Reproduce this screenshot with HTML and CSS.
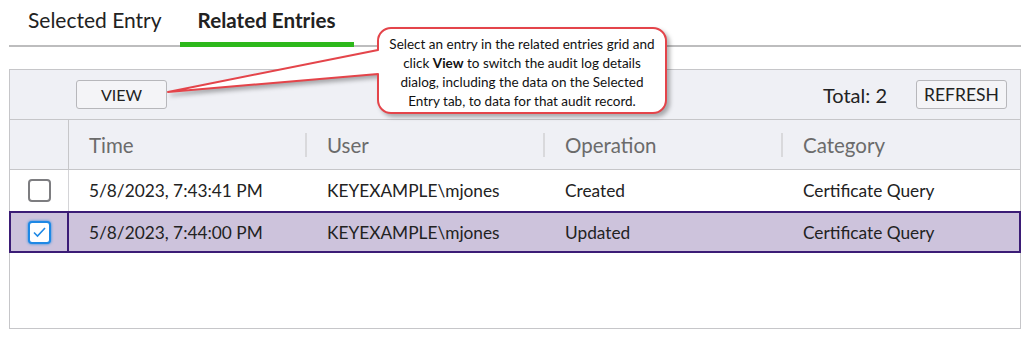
FILE: index.html
```html
<!DOCTYPE html>
<html lang="en">
<head>
  <meta charset="UTF-8">
  <title>Audit Log Details - Related Entries</title>
  <link rel="stylesheet" href="styles.css">
</head>
<body>
  <div class="page">
    <div class="tabs">
      <div class="tab">Selected Entry</div>
      <div class="tab active">Related Entries</div>
    </div>

    <div class="grid">
      <div class="toolbar">
        <button class="btn">VIEW</button>
        <div class="spacer"></div>
        <span class="total">Total: 2</span>
        <button class="btn refresh">REFRESH</button>
      </div>

      <div class="row head">
        <div class="cell check"></div>
        <div class="cell"><span class="sep"></span>Time</div>
        <div class="cell"><span class="sep"></span>User</div>
        <div class="cell"><span class="sep"></span>Operation</div>
        <div class="cell"><span class="sep"></span>Category</div>
      </div>

      <div class="row">
        <div class="cell check"><span class="box"></span></div>
        <div class="cell">5/8/2023, 7:43:41 PM</div>
        <div class="cell">KEYEXAMPLE\mjones</div>
        <div class="cell">Created</div>
        <div class="cell">Certificate Query</div>
      </div>

      <div class="row selected">
        <div class="cell check">
          <span class="box checked">
            <svg width="15" height="12" viewBox="0 0 15 12"><path d="M2 6.5 L5.5 10 L13 2" fill="none" stroke="#1e88e5" stroke-width="1.6"/></svg>
          </span>
        </div>
        <div class="cell">5/8/2023, 7:44:00 PM</div>
        <div class="cell">KEYEXAMPLE\mjones</div>
        <div class="cell">Updated</div>
        <div class="cell">Certificate Query</div>
      </div>

      <div class="empty"></div>
    </div>

    <!-- callout overlay -->
    <svg class="callout-shape" width="700" height="130" viewBox="0 0 700 130">
      <path d="M391 28 L653 28 A13 13 0 0 1 666 41 L666 100 A13 13 0 0 1 653 113 L391 113 A13 13 0 0 1 378 100 L378 74 L168 92 L378 50 L378 41 A13 13 0 0 1 391 28 Z"
            fill="#fff" stroke="#e4444a" stroke-width="2" stroke-linejoin="round"/>
    </svg>
    <div class="callout-text">
      <p>Select an entry in the related entries grid and<br>
      click <b>View</b> to switch the audit log details<br>
      dialog, including the data on the Selected<br>
      Entry tab, to data for that audit record.</p>
    </div>
  </div>
</body>
</html>
```

FILE: styles.css
```css
body {
  margin: 0;
  background: #fff;
  font-family: 'Lato', 'Open Sans', sans-serif;
  color: #222;
}
.page {
  position: relative;
  padding: 0 9px;
  width: 1012px;
}
.tabs {
  display: flex;
  padding-left: 1px;
  border-bottom: 2px solid #bdbdbe;
  height: 45px;
}
.tab {
  padding: 8px 18px 0;
  height: 37px;
  line-height: 24px;
  font-size: 21px;
  color: #222;
}
.tab.active {
  font-weight: bold;
  font-size: 20.6px;
  border-bottom: 5px solid #2db81b;
  height: 34px;
}
.grid {
  margin-top: 22px;
  border: 1px solid #c6c6c9;
  height: 258px;
  display: flex;
  flex-direction: column;
}
.toolbar {
  display: flex;
  align-items: center;
  height: 49px;
  background: #eff0f5;
  border-bottom: 1px solid #c6c6c9;
  padding: 0 13px 0 66px;
}
.spacer {
  flex: 1;
}
.btn {
  font-family: inherit;
  font-size: 16px;
  color: #222;
  background: #f4f4f7;
  border: 1px solid #b7b7bb;
  border-radius: 3px;
  width: 91px;
  height: 29px;
  padding: 0;
}
.btn.refresh {
  font-size: 17.5px;
}
.total {
  font-size: 20px;
  margin-right: 29px;
}
.row {
  display: grid;
  grid-template-columns: 59px 238px 238px 238px 1fr;
  height: 41px;
  border-bottom: 1px solid #d4d4d7;
  font-size: 17.3px;
}
.row.head {
  height: 49px;
  background: #eff0f5;
  border-bottom: 1px solid #c6c6c9;
  font-size: 20.5px;
  color: #6b6b6b;
}
.cell {
  position: relative;
  display: flex;
  align-items: center;
  padding-left: 20px;
  white-space: nowrap;
}
.cell.check {
  padding-left: 0;
  justify-content: center;
  border-right: 1px solid #d4d4d7;
}
.head .cell.check {
  border-right-color: #c6c6c9;
}
.sep {
  position: absolute;
  left: -2px;
  top: 13px;
  height: 24px;
  border-left: 2px solid #d9d9dc;
}
.head .cell:nth-child(2) .sep {
  display: none;
}
.box {
  width: 19px;
  height: 19px;
  border: 2px solid #7d7d80;
  border-radius: 4px;
  background: #fff;
  display: flex;
  align-items: center;
  justify-content: center;
}
.box.checked {
  border-color: #1e88e5;
  box-shadow: 0 0 3px #1e88e5;
}
.row.selected {
  background: #cdc3dc;
  height: 38px;
  border: 2px solid #3b1c76;
  margin: -1px -1px 0;
  grid-template-columns: 58px 238px 238px 238px 1fr;
}
.row.selected .cell.check {
  border-right: 2px solid #3b1c76;
}
.empty {
  flex: 1;
}
.callout-shape {
  position: absolute;
  left: 0;
  top: 0;
  filter: drop-shadow(3px 3px 2px rgba(0, 0, 0, 0.3));
}
.callout-text {
  position: absolute;
  left: 380px;
  top: 31px;
  width: 284px;
  height: 83px;
  display: flex;
  align-items: center;
  justify-content: center;
  text-align: center;
  font-size: 13.5px;
  line-height: 19px;
  color: #111;
}
.callout-text p {
  margin: 0;
}
```
